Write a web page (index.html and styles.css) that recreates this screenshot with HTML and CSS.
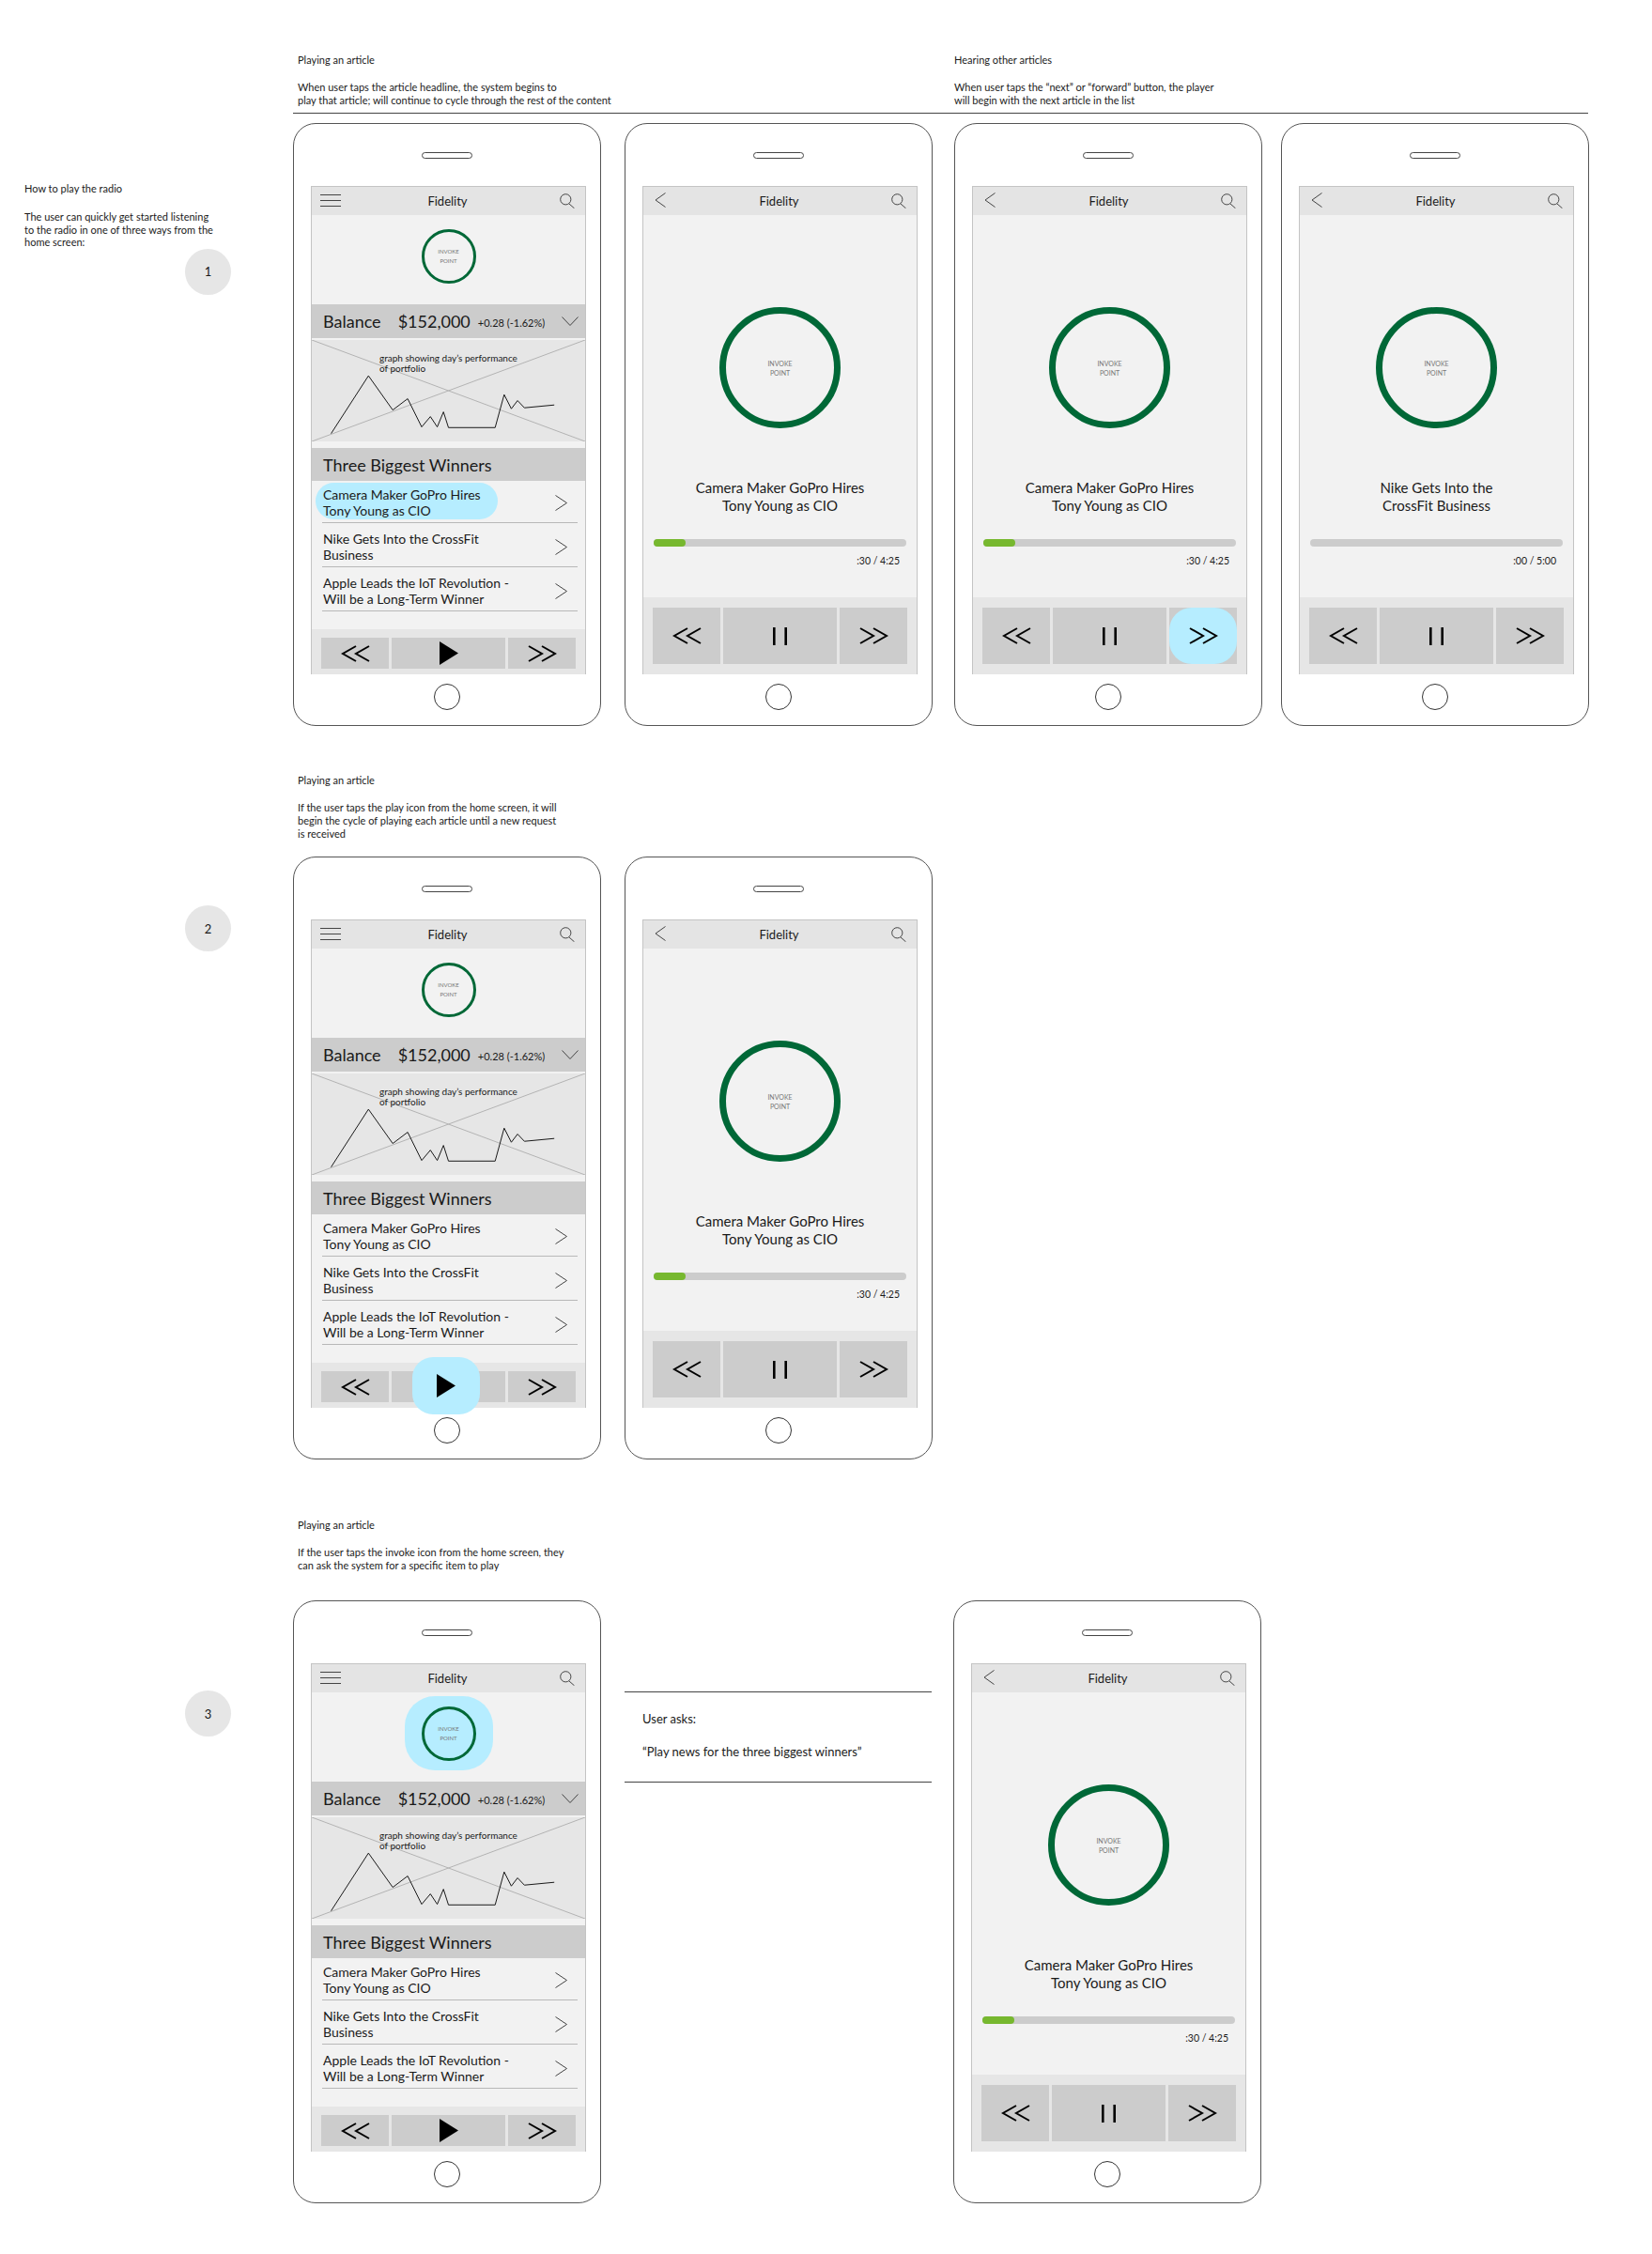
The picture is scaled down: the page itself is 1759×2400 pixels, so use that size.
FILE: index.html
```html
<!DOCTYPE html>
<html>
    <head>
        <meta charset="UTF-8">
        <title>Radio flows</title>
        <link rel="stylesheet" href="styles.css">
    </head>
    <body>
        <svg class="defs" width="0" height="0">
            <symbol id="i-menu" viewBox="0 0 22 13"><path d="M0 .5h22M0 6.5h22M0 12.5h22"/></symbol>
            <symbol id="i-search" viewBox="0 0 16 16"><circle cx="6.3" cy="6.3" r="5.6"/><path d="M10 11l5.5 4.8"/></symbol>
            <symbol id="i-back" viewBox="0 0 12 16"><path d="M11.5 .5L1 8l10.5 7.5"/></symbol>
            <symbol id="i-down" viewBox="0 0 18 10"><path d="M.5 .5L9 9.5l8.5-9"/></symbol>
            <symbol id="i-right" viewBox="0 0 13 17"><path d="M.5 .5L12.5 8.5.5 16.5"/></symbol>
            <symbol id="i-prev" viewBox="0 0 31 18"><path d="M16 1L2 9l14 8M30 1L16 9l14 8"/></symbol>
            <symbol id="i-next" viewBox="0 0 31 18"><path d="M1 1l14 8-14 8M15 1l14 8-14 8"/></symbol>
            <symbol id="i-play" viewBox="0 0 20 25"><path class="solid" d="M0 0l20 12.5L0 25z"/></symbol>
            <symbol id="i-pause" viewBox="0 0 15 19"><path d="M1.3 0v19M13.7 0v19"/></symbol>
            <symbol id="i-graph" viewBox="0 0 878 323" preserveAspectRatio="none">
                <path class="cross" d="M0 0L878 323M878 0L0 323"/>
                <path class="line" d="M62 298L182 114 260 223 308 187 353 277 381 244 403 277 423 229 439 279H589L618 174 641 219 661 193 683 216 779 207"/>
            </symbol>
        </svg>

        <!-- flow 1 -->
        <section class="flow flow-one">
            <div class="side side-one">
                <h3>How to play the radio</h3>
                <p>The user can quickly get started listening<br>to the radio in one of three ways from the<br>home screen:</p>
                <div class="step">1</div>
            </div>
            <div class="main">
                <div class="captions">
                    <div class="caption caption-wide">
                        <h3>Playing an article</h3>
                        <p>When user taps the article headline, the system begins to<br>play that article; will continue to cycle through the rest of the content</p>
                    </div>
                    <div class="caption">
                        <h3>Hearing other articles</h3>
                        <p>When user taps the “next” or “forward” button, the player<br>will begin with the next article in the list</p>
                    </div>
                </div>
                <div class="phones phones-one">
                    <div class="phone">
                        <div class="speaker"></div>
                        <div class="screen">
                            <div class="nav">
                                <svg class="ic-menu"><use href="#i-menu"/></svg>
                                <span class="nav-title">Fidelity</span>
                                <svg class="ic-search"><use href="#i-search"/></svg>
                            </div>
                            <div class="hero">
                                <div class="ring">INVOKE<br>POINT</div>
                            </div>
                            <div class="balance">
                                <span class="bal-label">Balance</span>
                                <span class="bal-value">$152,000</span>
                                <span class="bal-change">+0.28 (-1.62%)</span>
                                <svg class="ic-down"><use href="#i-down"/></svg>
                            </div>
                            <div class="graph">
                                <svg class="graph-art"><use href="#i-graph"/></svg>
                                <p>graph showing day’s performance<br>of portfolio</p>
                            </div>
                            <div class="winners">Three Biggest Winners</div>
                            <ul class="news">
                                <li><span class="tapped">Camera Maker GoPro Hires<br>Tony Young as CIO</span><svg class="ic-right"><use href="#i-right"/></svg></li>
                                <li><span>Nike Gets Into the CrossFit<br>Business</span><svg class="ic-right"><use href="#i-right"/></svg></li>
                                <li><span>Apple Leads the IoT Revolution -<br>Will be a Long-Term Winner</span><svg class="ic-right"><use href="#i-right"/></svg></li>
                            </ul>
                            <div class="controls">
                                <div class="btn btn-side"><svg class="ic-skip"><use href="#i-prev"/></svg></div>
                                <div class="btn btn-mid"><svg class="ic-play"><use href="#i-play"/></svg></div>
                                <div class="btn btn-side"><svg class="ic-skip"><use href="#i-next"/></svg></div>
                            </div>
                        </div>
                        <div class="home-key"></div>
                    </div>

                    <div class="phone">
                        <div class="speaker"></div>
                        <div class="screen">
                            <div class="nav">
                                <svg class="ic-back"><use href="#i-back"/></svg>
                                <span class="nav-title">Fidelity</span>
                                <svg class="ic-search"><use href="#i-search"/></svg>
                            </div>
                            <div class="now">
                                <div class="ring ring-big">INVOKE<br>POINT</div>
                                <div class="now-title">Camera Maker GoPro Hires<br>Tony Young as CIO</div>
                                <div class="track"><div class="fill"></div></div>
                                <div class="time">:30 / 4:25</div>
                            </div>
                            <div class="controls controls-big">
                                <div class="btn btn-side"><svg class="ic-skip"><use href="#i-prev"/></svg></div>
                                <div class="btn btn-mid"><svg class="ic-pause"><use href="#i-pause"/></svg></div>
                                <div class="btn btn-side"><svg class="ic-skip"><use href="#i-next"/></svg></div>
                            </div>
                        </div>
                        <div class="home-key"></div>
                    </div>

                    <div class="phone">
                        <div class="speaker"></div>
                        <div class="screen">
                            <div class="nav">
                                <svg class="ic-back"><use href="#i-back"/></svg>
                                <span class="nav-title">Fidelity</span>
                                <svg class="ic-search"><use href="#i-search"/></svg>
                            </div>
                            <div class="now">
                                <div class="ring ring-big">INVOKE<br>POINT</div>
                                <div class="now-title">Camera Maker GoPro Hires<br>Tony Young as CIO</div>
                                <div class="track"><div class="fill"></div></div>
                                <div class="time">:30 / 4:25</div>
                            </div>
                            <div class="controls controls-big">
                                <div class="btn btn-side"><svg class="ic-skip"><use href="#i-prev"/></svg></div>
                                <div class="btn btn-mid"><svg class="ic-pause"><use href="#i-pause"/></svg></div>
                                <div class="btn btn-side"><div class="tap-fill"><svg class="ic-skip"><use href="#i-next"/></svg></div></div>
                            </div>
                        </div>
                        <div class="home-key"></div>
                    </div>

                    <div class="phone">
                        <div class="speaker"></div>
                        <div class="screen">
                            <div class="nav">
                                <svg class="ic-back"><use href="#i-back"/></svg>
                                <span class="nav-title">Fidelity</span>
                                <svg class="ic-search"><use href="#i-search"/></svg>
                            </div>
                            <div class="now">
                                <div class="ring ring-big">INVOKE<br>POINT</div>
                                <div class="now-title">Nike Gets Into the<br>CrossFit Business</div>
                                <div class="track"></div>
                                <div class="time">:00 / 5:00</div>
                            </div>
                            <div class="controls controls-big">
                                <div class="btn btn-side"><svg class="ic-skip"><use href="#i-prev"/></svg></div>
                                <div class="btn btn-mid"><svg class="ic-pause"><use href="#i-pause"/></svg></div>
                                <div class="btn btn-side"><svg class="ic-skip"><use href="#i-next"/></svg></div>
                            </div>
                        </div>
                        <div class="home-key"></div>
                    </div>
                </div>
            </div>
        </section>

        <!-- flow 2 -->
        <section class="flow flow-two">
            <div class="side side-two">
                <div class="step">2</div>
            </div>
            <div class="main">
                <div class="caption caption-plain">
                    <h3>Playing an article</h3>
                    <p>If the user taps the play icon from the home screen, it will<br>begin the cycle of playing each article until a new request<br>is received</p>
                </div>
                <div class="phones phones-two">
                    <div class="phone">
                        <div class="speaker"></div>
                        <div class="screen">
                            <div class="nav">
                                <svg class="ic-menu"><use href="#i-menu"/></svg>
                                <span class="nav-title">Fidelity</span>
                                <svg class="ic-search"><use href="#i-search"/></svg>
                            </div>
                            <div class="hero">
                                <div class="ring">INVOKE<br>POINT</div>
                            </div>
                            <div class="balance">
                                <span class="bal-label">Balance</span>
                                <span class="bal-value">$152,000</span>
                                <span class="bal-change">+0.28 (-1.62%)</span>
                                <svg class="ic-down"><use href="#i-down"/></svg>
                            </div>
                            <div class="graph">
                                <svg class="graph-art"><use href="#i-graph"/></svg>
                                <p>graph showing day’s performance<br>of portfolio</p>
                            </div>
                            <div class="winners">Three Biggest Winners</div>
                            <ul class="news">
                                <li><span>Camera Maker GoPro Hires<br>Tony Young as CIO</span><svg class="ic-right"><use href="#i-right"/></svg></li>
                                <li><span>Nike Gets Into the CrossFit<br>Business</span><svg class="ic-right"><use href="#i-right"/></svg></li>
                                <li><span>Apple Leads the IoT Revolution -<br>Will be a Long-Term Winner</span><svg class="ic-right"><use href="#i-right"/></svg></li>
                            </ul>
                            <div class="controls">
                                <div class="btn btn-side"><svg class="ic-skip"><use href="#i-prev"/></svg></div>
                                <div class="btn btn-mid"><div class="tap-badge"><svg class="ic-play"><use href="#i-play"/></svg></div></div>
                                <div class="btn btn-side"><svg class="ic-skip"><use href="#i-next"/></svg></div>
                            </div>
                        </div>
                        <div class="home-key"></div>
                    </div>

                    <div class="phone">
                        <div class="speaker"></div>
                        <div class="screen">
                            <div class="nav">
                                <svg class="ic-back"><use href="#i-back"/></svg>
                                <span class="nav-title">Fidelity</span>
                                <svg class="ic-search"><use href="#i-search"/></svg>
                            </div>
                            <div class="now">
                                <div class="ring ring-big">INVOKE<br>POINT</div>
                                <div class="now-title">Camera Maker GoPro Hires<br>Tony Young as CIO</div>
                                <div class="track"><div class="fill"></div></div>
                                <div class="time">:30 / 4:25</div>
                            </div>
                            <div class="controls controls-big">
                                <div class="btn btn-side"><svg class="ic-skip"><use href="#i-prev"/></svg></div>
                                <div class="btn btn-mid"><svg class="ic-pause"><use href="#i-pause"/></svg></div>
                                <div class="btn btn-side"><svg class="ic-skip"><use href="#i-next"/></svg></div>
                            </div>
                        </div>
                        <div class="home-key"></div>
                    </div>
                </div>
            </div>
        </section>

        <!-- flow 3 -->
        <section class="flow flow-three">
            <div class="side side-three">
                <div class="step">3</div>
            </div>
            <div class="main">
                <div class="caption caption-plain">
                    <h3>Playing an article</h3>
                    <p>If the user taps the invoke icon from the home screen, they<br>can ask the system for a specific item to play</p>
                </div>
                <div class="phones phones-three">
                    <div class="phone">
                        <div class="speaker"></div>
                        <div class="screen">
                            <div class="nav">
                                <svg class="ic-menu"><use href="#i-menu"/></svg>
                                <span class="nav-title">Fidelity</span>
                                <svg class="ic-search"><use href="#i-search"/></svg>
                            </div>
                            <div class="hero">
                                <div class="halo"><div class="ring">INVOKE<br>POINT</div></div>
                            </div>
                            <div class="balance">
                                <span class="bal-label">Balance</span>
                                <span class="bal-value">$152,000</span>
                                <span class="bal-change">+0.28 (-1.62%)</span>
                                <svg class="ic-down"><use href="#i-down"/></svg>
                            </div>
                            <div class="graph">
                                <svg class="graph-art"><use href="#i-graph"/></svg>
                                <p>graph showing day’s performance<br>of portfolio</p>
                            </div>
                            <div class="winners">Three Biggest Winners</div>
                            <ul class="news">
                                <li><span>Camera Maker GoPro Hires<br>Tony Young as CIO</span><svg class="ic-right"><use href="#i-right"/></svg></li>
                                <li><span>Nike Gets Into the CrossFit<br>Business</span><svg class="ic-right"><use href="#i-right"/></svg></li>
                                <li><span>Apple Leads the IoT Revolution -<br>Will be a Long-Term Winner</span><svg class="ic-right"><use href="#i-right"/></svg></li>
                            </ul>
                            <div class="controls">
                                <div class="btn btn-side"><svg class="ic-skip"><use href="#i-prev"/></svg></div>
                                <div class="btn btn-mid"><svg class="ic-play"><use href="#i-play"/></svg></div>
                                <div class="btn btn-side"><svg class="ic-skip"><use href="#i-next"/></svg></div>
                            </div>
                        </div>
                        <div class="home-key"></div>
                    </div>

                    <div class="asks">
                        <p>User asks:</p>
                        <p>“Play news for the three biggest winners”</p>
                    </div>

                    <div class="phone">
                        <div class="speaker"></div>
                        <div class="screen">
                            <div class="nav">
                                <svg class="ic-back"><use href="#i-back"/></svg>
                                <span class="nav-title">Fidelity</span>
                                <svg class="ic-search"><use href="#i-search"/></svg>
                            </div>
                            <div class="now">
                                <div class="ring ring-big">INVOKE<br>POINT</div>
                                <div class="now-title">Camera Maker GoPro Hires<br>Tony Young as CIO</div>
                                <div class="track"><div class="fill"></div></div>
                                <div class="time">:30 / 4:25</div>
                            </div>
                            <div class="controls controls-big">
                                <div class="btn btn-side"><svg class="ic-skip"><use href="#i-prev"/></svg></div>
                                <div class="btn btn-mid"><svg class="ic-pause"><use href="#i-pause"/></svg></div>
                                <div class="btn btn-side"><svg class="ic-skip"><use href="#i-next"/></svg></div>
                            </div>
                        </div>
                        <div class="home-key"></div>
                    </div>
                </div>
            </div>
        </section>
    </body>
</html>
```

FILE: styles.css
```css
* {
    box-sizing: border-box;
}
body {
    margin: 0;
    background-color: white;
    color: #1a1a1a;
    font-family: "Lato", "Liberation Sans", sans-serif;
    font-size: 11px;
    line-height: 14px;
}
h3, p, ul {
    margin: 0;
    padding: 0;
    font-size: inherit;
    font-weight: normal;
}
svg {
    display: block;
    fill: none;
    stroke: #444444;
    stroke-width: 1;
    overflow: visible;
}
.defs {
    position: absolute;
}
.solid {
    fill: #000000;
    stroke: none;
}

/* page rows */
.flow {
    display: flex;
    height: 716px;
}
.flow-one {
    margin-top: 57px;
}
.flow-two {
    margin-top: 51px;
    height: 730px;
}
.flow-three {
    margin-top: 63px;
    height: 729px;
}
.side {
    width: 312px;
    flex: none;
    padding-left: 26px;
}
.side p {
    margin-top: 16px;
    line-height: 13.6px;
}
.side-one {
    padding-top: 137px;
}
.side-two {
    padding-top: 140px;
}
.side-three {
    padding-top: 183px;
}
.step {
    display: flex;
    align-items: center;
    justify-content: center;
    width: 49px;
    height: 49px;
    margin-left: 171px;
    border-radius: 50%;
    background-color: #e6e6e6;
    font-size: 13px;
}
.main {
    width: 1379px;
}
.captions {
    display: flex;
    margin-left: 0;
    padding-left: 5px;
    padding-bottom: 6px;
    border-bottom: 1px solid #444444;
}
.caption {
    flex: 1;
}
.caption p {
    margin-top: 15px;
}
.caption-wide {
    flex: none;
    width: 699px;
}
.caption-plain {
    padding-left: 5px;
}
.phones {
    display: flex;
    align-items: flex-start;
}
.phones-one {
    margin-top: 10px;
}
.phones-one .phone + .phone {
    margin-left: 25px;
}
.phones-one .phone:nth-child(3) {
    margin-left: 23px;
}
.phones-one .phone:nth-child(4) {
    margin-left: 20px;
}
.phones-two {
    margin-top: 17px;
}
.phones-two .phone + .phone {
    margin-left: 25px;
}
.phones-three {
    margin-top: 30px;
}

/* phone frame */
.phone {
    display: flex;
    flex-direction: column;
    align-items: center;
    flex: none;
    width: 328px;
    height: 642px;
    border: 1px solid #555555;
    border-radius: 24px;
    background-color: white;
}
.speaker {
    width: 54px;
    height: 7px;
    margin-top: 30px;
    border: 1px solid #444444;
    border-radius: 4px;
}
.screen {
    display: flex;
    flex-direction: column;
    width: 293px;
    height: 520px;
    margin-top: 29px;
    margin-left: 3px;
    border: 1px solid #c4c4c4;
    border-bottom: none;
    background-color: #f2f2f2;
}
.home-key {
    width: 28px;
    height: 28px;
    margin-top: 10px;
    border: 1px solid #333333;
    border-radius: 50%;
}

/* nav */
.nav {
    display: grid;
    grid-template-columns: 1fr auto 1fr;
    align-items: center;
    flex: none;
    height: 30px;
    padding: 0 11px 0 9px;
    background-color: #e4e4e4;
}
.nav-title {
    font-size: 13px;
}
.ic-menu {
    width: 22px;
    height: 13px;
    margin-top: -2px;
}
.ic-search {
    width: 16px;
    height: 16px;
    justify-self: end;
}
.ic-back {
    width: 12px;
    height: 16px;
    margin-top: -2px;
    margin-left: 3px;
}

/* home screen */
.hero {
    display: flex;
    justify-content: center;
    align-items: flex-start;
    flex: none;
    height: 95px;
    padding-top: 15px;
}
.ring {
    display: flex;
    align-items: center;
    justify-content: center;
    width: 58px;
    height: 58px;
    border: 3.5px solid #006837;
    border-radius: 50%;
    color: #777777;
    font-size: 6px;
    line-height: 10px;
    text-align: center;
}
.halo {
    margin-top: -11px;
    padding: 11px 18px 10px;
    border-radius: 32px;
    background-color: #b6edff;
}
.balance {
    display: flex;
    align-items: center;
    flex: none;
    height: 36px;
    padding: 0 7px 0 12px;
    background-color: #cccccc;
    font-size: 18px;
}
.bal-value {
    margin-left: 18px;
}
.bal-change {
    margin-top: 3px;
    margin-left: 8px;
    font-size: 11px;
}
.ic-down {
    width: 18px;
    height: 10px;
    margin-left: auto;
    margin-top: -1px;
}
.graph {
    position: relative;
    flex: none;
    height: 108px;
    margin-top: 2px;
    padding: 14px 0 0 72px;
    background-color: #e6e6e6;
    font-size: 10px;
    line-height: 11px;
}
.graph p {
    position: relative;
}
.graph-art {
    position: absolute;
    top: 0;
    left: 0;
    width: 100%;
    height: 100%;
}
.cross {
    stroke: #b3b3b3;
    vector-effect: non-scaling-stroke;
}
.line {
    stroke: #1a1a1a;
    vector-effect: non-scaling-stroke;
}
.winners {
    display: flex;
    align-items: center;
    flex: none;
    height: 35px;
    margin-top: 7px;
    padding-left: 12px;
    background-color: #cccccc;
    font-size: 18px;
}
.news {
    list-style: none;
    margin: 0 8px 0 11px;
    font-size: 14px;
    line-height: 17px;
}
.news li {
    display: flex;
    align-items: center;
    justify-content: space-between;
    padding: 8px 11px 4px 1px;
    border-bottom: 1px solid #b8b8b8;
}
.news li:first-child {
    padding-top: 6px;
}
.tapped {
    margin: -4px -18px -1px -8px;
    padding: 4px 18px 1px 8px;
    border-radius: 20px;
    background-color: #b6edff;
}
.ic-right {
    width: 13px;
    height: 17px;
}

/* player controls */
.controls {
    display: flex;
    gap: 3px;
    flex: none;
    height: 48px;
    margin-top: auto;
    padding: 9px 10px 6px 10px;
    background-color: #e6e6e6;
}
.controls-big {
    height: 82px;
    padding: 11px 10px;
}
.btn {
    position: relative;
    display: flex;
    align-items: center;
    justify-content: center;
    background-color: #cccccc;
}
.btn-side {
    flex: none;
    width: 72px;
}
.btn-mid {
    flex: 1;
}
.ic-skip {
    width: 31px;
    height: 18px;
    stroke: #000000;
    stroke-width: 2;
}
.ic-play {
    width: 20px;
    height: 25px;
}
.ic-pause {
    width: 15px;
    height: 19px;
    stroke: #000000;
    stroke-width: 2.6;
}
.tap-fill {
    display: flex;
    align-items: center;
    justify-content: center;
    width: 100%;
    height: 100%;
    border-radius: 24px;
    background-color: #b6edff;
}
.tap-badge {
    position: absolute;
    top: -15px;
    left: 22px;
    display: flex;
    align-items: center;
    justify-content: center;
    width: 72px;
    height: 61px;
    border-radius: 22px;
    background-color: #b6edff;
}

/* now playing */
.now {
    display: flex;
    flex-direction: column;
    align-items: center;
    padding: 98px 11px 0 11px;
}
.ring-big {
    width: 129px;
    height: 129px;
    border-width: 7px;
    font-size: 7px;
}
.now-title {
    margin-top: 54px;
    font-size: 15px;
    line-height: 19px;
    text-align: center;
}
.track {
    width: 100%;
    height: 8px;
    margin-top: 26px;
    border-radius: 4px;
    background-color: #cccccc;
}
.fill {
    width: 34px;
    height: 8px;
    border-radius: 4px;
    background-color: #77b82f;
}
.time {
    align-self: flex-end;
    margin-top: 8px;
    padding-right: 7px;
    font-size: 10.5px;
}

/* user asks note */
.asks {
    flex: none;
    width: 327px;
    height: 97px;
    margin-top: 97px;
    margin-left: 25px;
    margin-right: 23px;
    padding: 21px 0 0 19px;
    border-top: 1px solid #444444;
    border-bottom: 1px solid #444444;
    font-size: 13px;
}
.asks p + p {
    margin-top: 21px;
}
```
